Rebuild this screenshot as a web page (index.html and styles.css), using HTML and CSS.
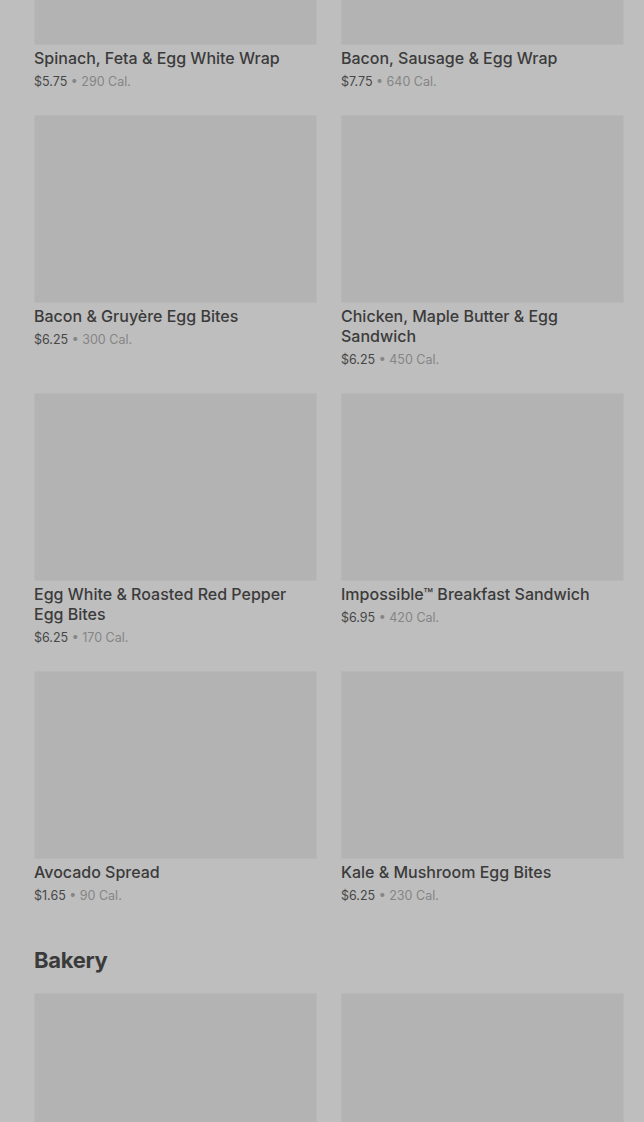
FILE: index.html
```html
<!DOCTYPE html>
<html lang="en">
<head>
  <meta charset="UTF-8">
  <meta name="viewport" content="width=device-width, initial-scale=1.0">
  <title>Menu</title>
  <link rel="stylesheet" href="styles.css">
</head>
<body>
  <div class="menu">
    <section class="category">
      <div class="grid">
        <div class="item">
          <div class="thumb"></div>
          <div class="name">Spinach, Feta &amp; Egg White Wrap</div>
          <div class="meta"><span class="price">$5.75</span> • 290 Cal.</div>
        </div>
        <div class="item">
          <div class="thumb"></div>
          <div class="name">Bacon, Sausage &amp; Egg Wrap</div>
          <div class="meta"><span class="price">$7.75</span> • 640 Cal.</div>
        </div>
        <div class="item">
          <div class="thumb"></div>
          <div class="name">Bacon &amp; Gruyère Egg Bites</div>
          <div class="meta"><span class="price">$6.25</span> • 300 Cal.</div>
        </div>
        <div class="item">
          <div class="thumb"></div>
          <div class="name">Chicken, Maple Butter &amp; Egg Sandwich</div>
          <div class="meta"><span class="price">$6.25</span> • 450 Cal.</div>
        </div>
        <div class="item">
          <div class="thumb"></div>
          <div class="name">Egg White &amp; Roasted Red Pepper Egg Bites</div>
          <div class="meta"><span class="price">$6.25</span> • 170 Cal.</div>
        </div>
        <div class="item">
          <div class="thumb"></div>
          <div class="name">Impossible™ Breakfast Sandwich</div>
          <div class="meta"><span class="price">$6.95</span> • 420 Cal.</div>
        </div>
        <div class="item">
          <div class="thumb"></div>
          <div class="name">Avocado Spread</div>
          <div class="meta"><span class="price">$1.65</span> • 90 Cal.</div>
        </div>
        <div class="item">
          <div class="thumb"></div>
          <div class="name">Kale &amp; Mushroom Egg Bites</div>
          <div class="meta"><span class="price">$6.25</span> • 230 Cal.</div>
        </div>
      </div>
    </section>

    <section class="category">
      <h2 class="category-title">Bakery</h2>
      <div class="grid">
        <div class="item">
          <div class="thumb"></div>
        </div>
        <div class="item">
          <div class="thumb"></div>
        </div>
      </div>
    </section>
  </div>
</body>
</html>
```

FILE: styles.css
```css
body {
  margin: 0;
  height: 100vh;
  background: #bebebe;
  font-family: Inter, Roboto, "Liberation Sans", sans-serif;
  color: #3b3b3b;
  overflow: hidden;
}
.menu {
  margin-top: -143px;
  padding-left: 34px;
}
.grid {
  display: grid;
  grid-template-columns: 283px 283px;
  column-gap: 24px;
  row-gap: 22px;
}
.thumb {
  height: 188px;
  background: #b3b3b3;
  border-radius: 2px;
  box-shadow: inset 0 0 0 1px #b8b8b8;
}
.name {
  margin-top: 3px;
  font-size: 16px;
  line-height: 20px;
  font-weight: 500;
  color: #3b3b3b;
}
.meta {
  margin-top: 3px;
  font-size: 12.5px;
  line-height: 22px;
  color: #858585;
}
.price {
  color: #474747;
}
.category-title {
  margin: 37px 0 17px;
  font-size: 22px;
  line-height: 32px;
  font-weight: 700;
  letter-spacing: -0.3px;
  color: #3b3b3b;
}
```
